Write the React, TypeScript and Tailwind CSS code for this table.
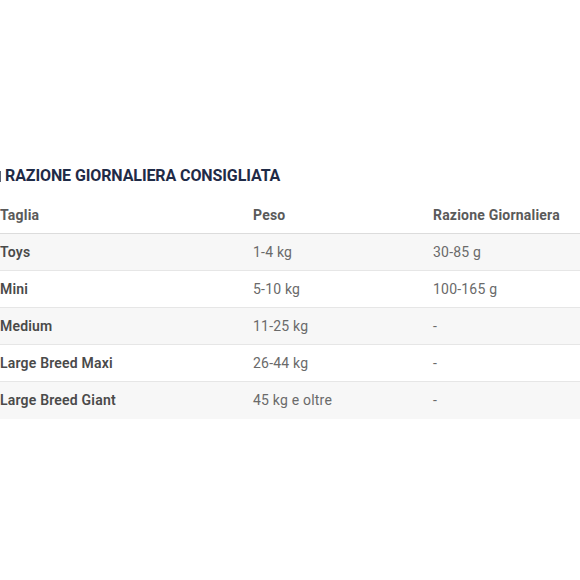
import React from "react";

const rows = [
  ["Toys", "1-4 kg", "30-85 g"],
  ["Mini", "5-10 kg", "100-165 g"],
  ["Medium", "11-25 kg", "-"],
  ["Large Breed Maxi", "26-44 kg", "-"],
  ["Large Breed Giant", "45 kg e oltre", "-"],
];

export default function App() {
  return (
    <div className="w-[580px] h-[580px] bg-white overflow-hidden pt-[164px] font-['Roboto',sans-serif]">
      <div className="flex items-center h-[24px]">
        <div className="w-[1px] h-[11px] bg-[#5a6478]" />
        <h2 className="ml-[4px] text-[16px] font-bold tracking-[-0.1px] text-[#1f2b47] leading-[24px]">
          RAZIONE GIORNALIERA CONSIGLIATA
        </h2>
      </div>
      <div className="mt-[9px] w-[580px] text-[14px] tracking-[0.2px]">
        <div className="grid grid-cols-[253px_180px_1fr] h-[37px] items-center border-b border-[#dcdcdc] font-bold text-[#5a5a5a]">
          <div>Taglia</div>
          <div>Peso</div>
          <div>Razione Giornaliera</div>
        </div>
        {rows.map((r, i) => (
          <div
            key={r[0]}
            className={`grid grid-cols-[253px_180px_1fr] h-[37px] items-center ${i < rows.length - 1 ? "border-b border-[#e6e6e6]" : ""} ${i % 2 === 0 ? "bg-[#f7f7f7]" : "bg-white"}`}
          >
            <div className="font-semibold text-[#4a4a4a]">{r[0]}</div>
            <div className="text-[#6a6a6a]">{r[1]}</div>
            <div className="text-[#6a6a6a]">{r[2]}</div>
          </div>
        ))}
      </div>
    </div>
  );
}
